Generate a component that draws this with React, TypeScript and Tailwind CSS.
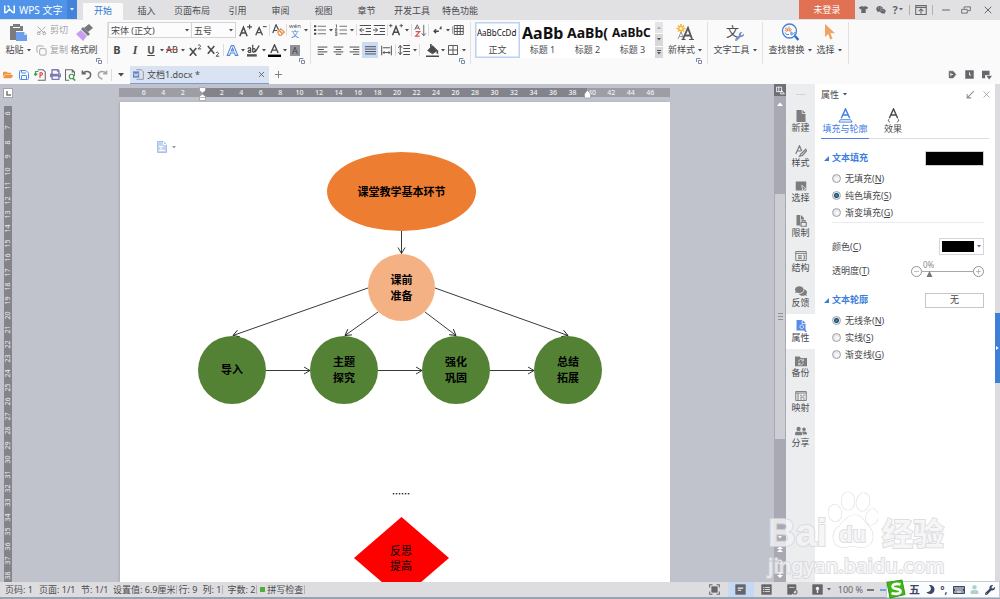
import { useState } from 'react'
import type { ReactNode } from 'react'
import {
  FaComments,
  FaFolderOpen,
  FaKeyboard,
  FaMoon,
  FaPrint,
  FaTshirt,
  FaUser,
  FaUserFriends,
  FaWeixin,
  FaWrench,
} from 'react-icons/fa'
import { Copy, Minus, Plus, Save, Scissors, X } from 'lucide-react'
import clsx from 'clsx'

const MENU_TABS = ['插入', '页面布局', '引用', '审阅', '视图', '章节', '开发工具', '特色功能']

const STYLES = [
  { sample: 'AaBbCcDd', name: '正文', size: 'text-[8px]' },
  { sample: 'AaBb', name: '标题 1', size: 'text-[16px] font-bold' },
  { sample: 'AaBb(', name: '标题 2', size: 'text-[14px] font-bold' },
  { sample: 'AaBbC', name: '标题 3', size: 'text-[12px] font-bold' },
]

// 横向标尺 -6..46，纵向标尺 6..38
const H_TICKS = Array.from({ length: 27 }, (_, i) => Math.abs(i * 2 - 6))
const V_TICKS = Array.from({ length: 33 }, (_, i) => i + 6)

/* ---------- 基础元件 ---------- */

function Icon({ size = 12, children }: { size?: number; children: ReactNode }) {
  return (
    <svg width={size} height={size} viewBox="0 0 16 16" fill="none" stroke="currentColor" className="shrink-0">
      {children}
    </svg>
  )
}

function Tri({ className }: { className?: string }) {
  return (
    <svg width="4" height="3" viewBox="0 0 4 3" className={clsx('shrink-0', className)}>
      <path d="M0 0h4L2 2.6z" fill="currentColor" />
    </svg>
  )
}

function Tool({ label, wide, children }: { label: string; wide?: boolean; children: ReactNode }) {
  return (
    <button
      type="button"
      aria-label={label}
      className={clsx('h-4 shrink-0 flex items-center justify-center', wide ? 'w-[18px]' : 'w-[14px]')}
    >
      {children}
    </button>
  )
}

function Drop({ label }: { label: string }) {
  return (
    <button type="button" aria-label={label} className="w-[7px] h-4 shrink-0 flex items-center justify-center">
      <Tri />
    </button>
  )
}

function Sep() {
  return <span className="w-px h-3 mx-px shrink-0 bg-[#dcdcdc]" />
}

function Group({ launcher, className, children }: { launcher?: boolean; className?: string; children: ReactNode }) {
  return (
    <div className={clsx('flex flex-col shrink-0 border-r border-[#e0e0e0] mb-px', className)}>
      {children}
      {launcher && (
        <button type="button" aria-label="更多设置" className="self-end mr-[5px]">
          <svg width="6" height="6" viewBox="0 0 6 6" fill="none" stroke="#7d8aa5">
            <path d="M.5 4V.5h4M2.500 2.500h3v3h-3z" />
          </svg>
        </button>
      )}
    </div>
  )
}

function BigTool({ label, drop, className, children }: { label: string; drop?: boolean; className?: string; children: ReactNode }) {
  return (
    <button type="button" className={clsx('h-9 shrink-0 flex flex-col items-center justify-between', className)}>
      <span className="h-5 flex items-center">{children}</span>
      <span className="h-4 flex items-center gap-[3px] whitespace-nowrap">
        {label}
        {drop && <Tri />}
      </span>
    </button>
  )
}

/* ---------- 标题栏 ---------- */

function TitleBar() {
  return (
    <header className="h-5 shrink-0 flex bg-[#e1e1e3]">
      <button type="button" className="w-[67px] h-[19px] flex items-center gap-1 pl-1 bg-[#5094ea] text-white text-[10px] whitespace-nowrap">
        <svg width="11" height="9" viewBox="0 0 22 18" fill="none" stroke="#fff" strokeWidth="3">
          <path d="M1.500 1v14h3L11 8l6.500 7h3V1" />
          <path d="M7 1l4 4" />
        </svg>
        WPS 文字
      </button>
      <button type="button" aria-label="主菜单" className="w-[10px] h-[19px] flex items-center justify-center bg-[#4383da] text-white">
        <Tri />
      </button>
      <nav className="flex ml-[6px]">
        <button type="button" className="w-10 mt-[3px] mr-[2px] pb-[2px] bg-[#fafafa] text-[#2f78cf]">开始</button>
        {MENU_TABS.map((t) => (
          <button key={t} type="button" className={clsx('pt-[2px]', t.length > 2 ? 'w-12' : 'w-[43px]')}>
            {t}
          </button>
        ))}
      </nav>
      <div className="ml-auto flex h-[19px] items-center text-[#66666c]">
        <button type="button" className="w-14 h-full bg-[#e17153] text-white">未登录</button>
        <button type="button" aria-label="皮肤" className="w-[17px] flex justify-center"><FaTshirt size={9} /></button>
        <button type="button" aria-label="微信" className="w-[17px] flex justify-center"><FaWeixin size={10} /></button>
        <button type="button" className="w-[17px] flex items-center justify-center gap-px text-[11px] font-bold">
          ?<Tri />
        </button>
        <span className="w-px h-[10px] mx-[3px] bg-[#b0b0b4]" />
        <button type="button" aria-label="隐藏功能区" className="w-4 flex justify-center">
          <Icon size={12}>
            <path d="M1 2h14v12H1zM1 4.500h14M8 13V7M5 9.500l3-3 3 3" strokeWidth="1.400" />
          </Icon>
        </button>
        <span className="w-px h-[10px] mx-[3px] bg-[#b0b0b4]" />
        <button type="button" aria-label="最小化" className="w-5 flex justify-center"><Minus size={12} strokeWidth={2} /></button>
        <button type="button" aria-label="还原" className="w-5 flex justify-center">
          <Icon size={10}>
            <path d="M1 7h9v6H1zM5 6V3h10v6h-4" strokeWidth="1.400" />
          </Icon>
        </button>
        <button type="button" aria-label="关闭" className="w-6 flex justify-center"><X size={12} strokeWidth={2} /></button>
      </div>
    </header>
  )
}

/* ---------- 功能区 ---------- */

function Lines({ d, active, label }: { d: string; active?: boolean; label: string }) {
  return (
    <button
      type="button"
      aria-label={label}
      className={clsx('w-4 h-4 shrink-0 flex items-center justify-center', active && 'bg-[#c9dcf4]')}
    >
      <Icon size={11}><path d={d} strokeWidth="1.400" /></Icon>
    </button>
  )
}

function ClipboardGroup() {
  return (
    <Group launcher className="w-[108px]">
      <div className="flex h-9">
        <BigTool label="粘贴" drop className="w-9">
          <svg width="18" height="17" viewBox="0 0 18 17">
            <path d="M1 2h3V0h7v2h3v5H7v9H1z" fill="#7b7b7f" />
            <path d="M4 3.500h7" stroke="#fafafa" />
            <path d="M7 8h8l3 3v6H7z" fill="#6e9dec" />
            <path d="M15 8v3h3z" fill="#c8dbfa" />
          </svg>
        </BigTool>
        <div className="flex flex-col justify-between text-[#a5a5a8] whitespace-nowrap">
          <button type="button" className="h-4 flex items-center gap-[3px]"><Scissors size={11} className="-rotate-90" />剪切</button>
          <button type="button" className="h-4 flex items-center gap-[3px]"><Copy size={11} />复制</button>
        </div>
        <BigTool label="格式刷" className="w-8">
          <svg width="17" height="17" viewBox="0 0 17 17">
            <path d="M13 0l4 4-5 4-4-4z" fill="#77777b" />
            <path d="M7 3l7 7-2 2-7-7z" fill="#77777b" />
            <path d="M5 6l6 6-4 5-7-7z" fill="#c79df0" />
          </svg>
        </BigTool>
      </div>
    </Group>
  )
}

function FontGroup() {
  return (
    <Group launcher className="w-[203px]">
      <div className="flex items-center h-4">
        <label className="relative w-[84px] h-4 flex">
          <select aria-label="字体" className="w-full h-4 appearance-none border border-[#d4d4d8] bg-[#fcfcfc] pl-[2px] leading-none">
            <option>宋体 (正文)</option>
          </select>
          <Tri className="absolute right-[3px] top-[7px] pointer-events-none" />
        </label>
        <label className="relative w-11 h-4 flex">
          <select aria-label="字号" className="w-full h-4 appearance-none border border-l-0 border-[#d4d4d8] bg-[#fcfcfc] pl-[2px] leading-none">
            <option>五号</option>
          </select>
          <Tri className="absolute right-[3px] top-[7px] pointer-events-none" />
        </label>
        <Tool label="增大字号" wide>
          <Icon size={13}><path d="M1 15L5.500 4 10 15M2.500 11h6" strokeWidth="1.900" /><path d="M10 3.500h6M13 .5v6" strokeWidth="1.400" /></Icon>
        </Tool>
        <Tool label="减小字号">
          <Icon size={12}><path d="M1 15L5.500 5 10 15M2.500 11.500h6" strokeWidth="1.800" /><path d="M10.500 3.500h5" strokeWidth="1.400" /></Icon>
        </Tool>
        <Sep />
        <Tool label="清除格式">
          <Icon size={13}>
            <path d="M1 11L5 1l3 6M2.500 8h4" strokeWidth="1.500" />
            <path d="M7 10l4-4 4 4-4 4H9z" stroke="#e98f45" strokeWidth="1.500" />
            <path d="M9 8l4 4" stroke="#e98f45" strokeWidth="2" />
          </Icon>
        </Tool>
        <Sep />
        <Tool label="拼音指南">
          <span className="flex flex-col items-center text-[6px] leading-[8px]">
            wén<span className="text-[8px] leading-[8px] text-[#4a84dc]">文</span>
          </span>
        </Tool>
        <Drop label="拼音选项" />
      </div>
      <div className="flex items-center h-4 mt-[4px]">
        <Tool label="加粗" wide><b className="text-[11px]">B</b></Tool>
        <Tool label="倾斜" wide><i className="font-['Liberation_Serif',serif] font-bold text-[12px]">I</i></Tool>
        <Tool label="下划线"><span className="text-[10px] font-bold underline">U</span></Tool>
        <Drop label="下划线样式" />
        <Tool label="删除线"><s className="text-[9px] font-medium decoration-[#d94b4b]">AB</s></Tool>
        <Drop label="删除线样式" />
        <Tool label="上标" wide>
          <Icon size={13}><path d="M1 5l8 9.500M9 5L1 14.500" strokeWidth="1.900" /><path d="M11 2c1-1.500 3.500-1 3 1-.3 1-2 2-3 3h4" strokeWidth="1.200" /></Icon>
        </Tool>
        <Tool label="下标" wide>
          <Icon size={13}><path d="M1 2.500L9 12M9 2.500L1 12" strokeWidth="1.900" /><path d="M11 11c1-1.500 3.500-1 3 1-.3 1-2 2-3 3h4" strokeWidth="1.200" /></Icon>
        </Tool>
        <Sep />
        <Tool label="文字效果">
          <Icon size={13}>
            <path d="M1.500 14L6.500 2h3l5 12h-3L10.500 11h-5L4.500 14zM6.500 8.500h3L8 5z" stroke="#4f86de" strokeWidth="1.300" />
          </Icon>
        </Tool>
        <Drop label="效果样式" />
        <Tool label="突出显示">
          <Icon size={13}>
            <path d="M1 6c1-2 3.500-2 3.500 0v4c-4 1.500-4.500-2.500 0-2.500M7 1v9M7 6c4-2 4 4 0 4M15 2l-5 8" strokeWidth="1.500" />
            <path d="M0 14h12" strokeWidth="3" stroke="#555" />
          </Icon>
        </Tool>
        <Drop label="突出显示颜色" />
        <Tool label="字体颜色">
          <Icon size={13}>
            <path d="M3.500 11L8 1l4.500 10M5 7.500h6" strokeWidth="1.700" />
            <path d="M0 14.500h16" stroke="#000" strokeWidth="3" />
          </Icon>
        </Tool>
        <Drop label="选择字体颜色" />
        <Tool label="字符底纹"><span className="w-[10px] h-[11px] bg-[#929298] text-[#444] text-[9px] leading-[11px]">A</span></Tool>
      </div>
    </Group>
  )
}

function ParagraphGroup() {
  return (
    <Group launcher className="w-[160px] pl-[2px]">
      <div className="flex items-center h-4">
        <Tool label="项目符号"><Icon><path d="M5 3h11M5 8h11M5 13h11" /><path d="M0 3h3M0 8h3M0 13h3" strokeWidth="2.500" /></Icon></Tool>
        <Drop label="项目符号样式" />
        <Tool label="编号"><Icon><path d="M6 3h10M6 8h10M6 13h10M1 1h1v4M0 6.500h2.500v1.500H.5v1.500H3M0 11.500h2.500v4H0M0 13.500h2" /></Icon></Tool>
        <Drop label="编号样式" />
        <Sep />
        <Tool label="减少缩进"><Icon><path d="M1 2h15M9 6h7M9 10h7M1 14h15M7 8H1M4 5L1 8l3 3" strokeWidth="1.300" /></Icon></Tool>
        <Tool label="增加缩进"><Icon><path d="M1 2h15M9 6h7M9 10h7M1 14h15M0 8h6M3 5l3 3-3 3" strokeWidth="1.300" /></Icon></Tool>
        <Sep />
        <Tool label="中文版式"><Icon size={14}><path d="M4 14L8 4l4 10M5.500 10.500h5" strokeWidth="1.700" /><path d="M0 3h4M2 1v4M12 3h4M14 1v4" /></Icon></Tool>
        <Drop label="版式选项" />
        <Sep />
        <Tool label="排序">
          <Icon size={13}>
            <path d="M1 7l3-6 3 6M2 5h4" />
            <path d="M2 9.500h5L2 15h5" stroke="#e05252" strokeWidth="1.500" />
            <path d="M12 1v13M9.500 11.500L12 14.500l2.500-3" />
          </Icon>
        </Tool>
        <Sep />
        <Tool label="显示标记"><Icon size={11}><path d="M13 2v3h-2M10 9H3M6 6L3 9l3 3" strokeWidth="2" /></Icon></Tool>
        <Drop label="标记选项" />
        <Tool label="制表位"><Icon><path d="M3 2h12v12H3zM3 6h12M3 10h12M7 2v12M11 2v12M0 3v10" strokeWidth="1.200" /></Icon></Tool>
      </div>
      <div className="flex items-center h-4 mt-[4px] pl-px">
        <Lines label="左对齐" d="M1 3h14M1 6.500h9M1 10h14M1 13.500h9" />
        <Lines label="居中" d="M1 3h14M4 6.500h8M1 10h14M4 13.500h8" />
        <Lines label="右对齐" d="M1 3h14M6 6.500h9M1 10h14M6 13.500h9" />
        <Lines label="两端对齐" active d="M0 2.500h16M0 6h16M0 9.500h16M0 13h16" />
        <Lines label="分散对齐" d="M1 1v14M15 1v14M3 4h10M3 11h10M5 9l-2 2 2 2M11 9l2 2-2 2" />
        <Sep />
        <Tool label="行距"><Icon><path d="M7 2h9M7 6h9M7 10h9M7 14h9M3 2v12M.5 5L3 2l2.500 3M.5 11L3 14l2.500-3" strokeWidth="1.300" /></Icon></Tool>
        <Drop label="行距选项" />
        <Sep />
        <span className="flex pl-1">
          <Tool label="底纹">
            <Icon size={13}>
              <path d="M2 8l6-6 6 6-6 4z" fill="currentColor" />
              <path d="M6 0v5M14 8v4M0 15h16" strokeWidth="2" />
            </Icon>
          </Tool>
          <Drop label="底纹颜色" />
          <Tool label="边框"><Icon><path d="M2 2h12v12H2zM8 2v12M2 8h12" strokeWidth="1.200" /></Icon></Tool>
          <Drop label="边框样式" />
        </span>
      </div>
    </Group>
  )
}

function StyleGallery() {
  return (
    <div className="flex shrink-0 h-9 ml-1">
      {STYLES.map((s, i) => (
        <button
          key={s.name}
          type="button"
          className={clsx(
            'w-[45px] overflow-hidden flex flex-col justify-between bg-white border',
            i === 0 ? 'border-[#bcd2f2] outline outline-1 -outline-offset-2 outline-[#dbe7f8]' : 'border-transparent',
          )}
        >
          <span className={clsx('h-5 w-full pl-px text-left leading-5 text-[#111]', s.size)}>{s.sample}</span>
          <span className="h-[14px] w-full leading-[14px] text-center">{s.name}</span>
        </button>
      ))}
      <div className="w-2 flex flex-col gap-px text-[#555]">
        <button type="button" aria-label="上一行" className="flex-1 flex items-center justify-center bg-[#e4e4e6]"><Tri className="rotate-180 text-[#aaa]" /></button>
        <button type="button" aria-label="下一行" className="flex-1 flex items-center justify-center bg-[#d8d8db]"><Tri /></button>
        <button type="button" aria-label="展开样式" className="flex-1 flex flex-col gap-px items-center justify-center bg-[#d8d8db]">
          <span className="w-1 h-px bg-[#555]" /><Tri />
        </button>
      </div>
    </div>
  )
}

function Ribbon() {
  return (
    <div className="h-[45px] shrink-0 flex pt-[2px] bg-[#fafafa]">
      <ClipboardGroup />
      <FontGroup />
      <ParagraphGroup />
      <StyleGallery />
      <Group launcher className="w-[45px]">
        <BigTool label="新样式" drop>
          <svg width="18" height="17" viewBox="0 0 18 17">
            <path d="M5 0v9M.5 4.500h9M2 1.500l6 6M8 1.500l-6 6" stroke="#f2b436" strokeWidth="1.500" />
            <circle cx="5" cy="4.500" r="2" fill="#fff3cf" stroke="#f2b436" />
            <path d="M2 15L5 8l3 7M3 12.500h4" fill="none" stroke="#999" />
            <path d="M7 15L12 4l4 11M8.500 11.500h6" fill="none" stroke="#55555a" strokeWidth="1.800" />
            <path d="M5.500 15.500h4M13 15.500h5" stroke="#55555a" />
          </svg>
        </BigTool>
      </Group>
      <Group className="w-[55px]">
        <BigTool label="文字工具" drop>
          <span className="relative text-[13px] leading-[14px] pr-[5px] pb-[3px]">
            文
            <FaWrench size={9} className="absolute right-0 bottom-0 text-[#7b8fc4]" />
          </span>
        </BigTool>
      </Group>
      <Group className="w-[86px]">
        <div className="flex">
          <BigTool label="查找替换" drop className="w-[54px]">
            <svg width="18" height="18" viewBox="0 0 18 18" fill="none">
              <circle cx="8.500" cy="8" r="7" stroke="#3f82db" strokeWidth="1.300" />
              <path d="M14 13l3.500 4" stroke="#2f6fc9" strokeWidth="2.500" />
              <path d="M4 5.500c1-1 2.500-.5 2.500.8V8c-2.500.8-3.500-1.500 0-1.500M8 3.500V8M8 6c3-1 3 2.300 0 2" stroke="#e2864b" />
              <path d="M4 9.500l1.500 2H8M10 8.500V12M10 10c2.500-1 2.500 2 0 2M14.500 9.500c-2-1-2 3 0 2" stroke="#3f82db" strokeWidth=".9" />
            </svg>
          </BigTool>
          <BigTool label="选择" drop className="w-6">
            <svg width="11" height="16" viewBox="0 0 11 16">
              <path d="M1 0v13l3.200-3 2 5.500 2.300-1L6.300 9.300H11z" fill="#f0a25f" />
            </svg>
          </BigTool>
        </div>
      </Group>
    </div>
  )
}

/* ---------- 文档标签栏 ---------- */

function DocTabs() {
  return (
    <div className="h-[19px] shrink-0 flex items-center bg-[#fafafa]">
      <div className="flex items-center">
        <button type="button" aria-label="打开" className="w-4 flex justify-center text-[#ef9440]"><FaFolderOpen size={10} /></button>
        <button type="button" aria-label="保存" className="w-4 flex justify-center text-[#4f8be0]"><Save size={12} strokeWidth={2} /></button>
        <button type="button" aria-label="输出为PDF" className="w-4 flex justify-center text-[#66666c]">
          <Icon>
            <path d="M5 1h7l3 3v11H5" strokeWidth="1.400" />
            <path d="M8 12V5c5-1 4 4 0 3.500" stroke="#dd4d43" strokeWidth="1.500" />
            <path d="M6 3L2 3.500V8M0 6l2 2.500L4.500 6" stroke="#3f9b4c" strokeWidth="1.500" />
          </Icon>
        </button>
        <button type="button" aria-label="打印" className="w-[14px] flex justify-center text-[#7d79b5]"><FaPrint size={11} /></button>
        <button type="button" aria-label="打印预览" className="w-4 flex justify-center text-[#66666c]">
          <Icon>
            <path d="M7 15H2V1h9l3 3v5M11 1v3h3" strokeWidth="1.400" />
            <circle cx="10" cy="10" r="3" stroke="#3f9b4c" strokeWidth="1.500" />
            <path d="M12 12.500l3 3" stroke="#3f9b4c" strokeWidth="2" />
          </Icon>
        </button>
        <button type="button" aria-label="撤销" className="w-4 flex justify-center text-[#66666c]">
          <Icon size={11}><path d="M2 2v5h5M2.500 6.500C6 2 14 3 14 8c0 4-3 6-6 6.500" strokeWidth="2.200" /></Icon>
        </button>
        <button type="button" aria-label="恢复" className="w-4 flex justify-center text-[#a5a5a8]">
          <Icon size={11}><path d="M14 2v5H9M13.500 6.500C10 2 2 3 2 8c0 4 3 6 6 6.500" strokeWidth="2.200" /></Icon>
        </button>
        <Sep />
        <button type="button" aria-label="自定义" className="w-4 flex justify-center">
          <svg width="6" height="4" viewBox="0 0 6 4"><path d="M0 0h6L3 3.600z" fill="currentColor" /></svg>
        </button>
      </div>
      <div className="w-[139px] h-[18px] self-end flex items-center gap-[3px] px-[3px] ml-px bg-[#dae3f1] border-b border-[#7a9cd4]">
        <Icon size={11}>
          <path d="M5 1h7l3 3v11H5" stroke="#777" />
          <path d="M0 3.500h9v9H0z" fill="#5b7fc0" stroke="none" />
          <path d="M1.500 5.500L3 10.500l1.500-3.500L6 10.500l1.500-5" stroke="#fff" />
        </Icon>
        <a href="#doc" className="whitespace-nowrap">文档1.docx *</a>
        <button type="button" aria-label="关闭文档" className="ml-auto"><X size={9} strokeWidth={2} /></button>
      </div>
      <button type="button" aria-label="新建标签" className="ml-1 text-[#77777b]"><Plus size={11} strokeWidth={2} /></button>
      <div className="ml-auto flex items-center pr-[5px] text-[#66666c]">
        <button type="button" aria-label="文档" className="w-[17px] flex justify-center">
          <Icon size={9}><path d="M2 2h7l5 6-5 6H2z" fill="currentColor" /><path d="M5 5v6M5 8h4" stroke="#fafafa" strokeWidth="1.500" /></Icon>
        </button>
        <button type="button" aria-label="历史" className="w-[17px] flex justify-center">
          <Icon size={9}><path d="M1 1h14v14H1z" fill="currentColor" /><path d="M8 4v5h3" stroke="#fff" strokeWidth="1.500" /></Icon>
        </button>
        <button type="button" aria-label="更多" className="w-[17px] flex justify-center">
          <Icon size={10}><path d="M0 1h12v7H5v5H0zM7 9h9l-4.500 6z" fill="currentColor" stroke="none" /></Icon>
        </button>
      </div>
    </div>
  )
}

/* ---------- 文档画布 ---------- */

function RulerThumb({ bottomOnly, className }: { bottomOnly?: boolean; className: string }) {
  return (
    <svg width="7" height="14" viewBox="0 0 7 14" fill="#fff" stroke="#8a8a90" strokeWidth=".6" className={clsx('absolute -top-px', className)}>
      {!bottomOnly && <path d="M.5.5h6v3L3.500 6l-3-2.500z" />}
      {bottomOnly ? <path d="M3.500 3l3 4v4h-6V7z" /> : <path d="M3.500 7l3 2.500v4h-6v-4zM.5 10.500h6" />}
    </svg>
  )
}

const NODES = [
  { lines: ['课堂教学基本环节'], box: 'left-[207px] top-[50px] w-[149px] h-[79px] bg-[#ed7d31]' },
  { lines: ['课前', '准备'], box: 'left-[248px] top-[152px] w-[67px] h-[67px] bg-[#f4b183]' },
  { lines: ['导入'], box: 'left-[78px] top-[234px] w-[68px] h-[68px] bg-[#548235]' },
  { lines: ['主题', '探究'], box: 'left-[190px] top-[234px] w-[68px] h-[68px] bg-[#548235]' },
  { lines: ['强化', '巩固'], box: 'left-[302px] top-[234px] w-[68px] h-[68px] bg-[#548235]' },
  { lines: ['总结', '拓展'], box: 'left-[414px] top-[234px] w-[68px] h-[68px] bg-[#548235]' },
]

const LINKS = [
  'M281.500 129V151.500',
  'M248 186L113 233.500',
  'M258 210L225 233.500',
  'M305 210L336 233.500',
  'M315 186L448 233.500',
  'M146 268.500H190',
  'M258 268.500H302',
  'M370 268.500H414',
]

function Page() {
  return (
    <article id="doc" className="relative flex-1 overflow-hidden bg-white shadow-[-1px_0_2px_#a9abb5] text-black text-[11px] leading-4">
      <button type="button" aria-label="粘贴选项" className="absolute left-[37px] top-[39px] flex items-center gap-[5px] text-[#9a9aa0]">
        <svg width="10" height="12" viewBox="0 0 10 12" fill="none">
          <path d="M.5.5h6l3 3v8h-9z" fill="#c2d5f0" stroke="#a9c2e6" />
          <path d="M6.500.5v3h3M2 5.500h4M2 9.500h6M4 5.500v4" stroke="#fff" />
        </svg>
        <Tri />
      </button>
      <svg width="550" height="480" className="absolute left-0 top-0" fill="none" stroke="#222" strokeWidth=".9">
        <defs>
          <marker id="arrow" markerUnits="userSpaceOnUse" markerWidth="10" markerHeight="10" refX="7" refY="4.500" orient="auto">
            <path d="M1 1l6 3.500L1 8" fill="none" stroke="#222" strokeWidth=".9" />
          </marker>
        </defs>
        {LINKS.map((d) => (
          <path key={d} d={d} markerEnd="url(#arrow)" />
        ))}
        <path d="M281.500 415L329 456l-47.500 41L234 456z" fill="#f00" stroke="none" />
      </svg>
      {NODES.map((n) => (
        <div key={n.lines[0]} className={clsx('absolute rounded-[50%] flex flex-col items-center justify-center font-bold whitespace-nowrap', n.box)}>
          {n.lines.map((l) => (
            <span key={l}>{l}</span>
          ))}
        </div>
      ))}
      <div lang="zh-CN" className="absolute left-[272px] top-[384px] font-['Noto_Sans_CJK_SC',sans-serif] text-[9px] font-bold">……</div>
      <div className="absolute left-[270px] top-[441px] w-6 flex flex-col leading-[15px]">
        <span>反思</span>
        <span>提高</span>
      </div>
    </article>
  )
}

function Canvas() {
  return (
    <main className="flex-1 min-w-0 flex bg-[#c0c2cc]">
      <div className="w-[14px] shrink-0 flex flex-col pt-1">
        <button type="button" aria-label="制表符" className="ml-[3px] mb-[8px] w-[10px] h-[10px] border border-[#a5a6ae] bg-white flex items-center justify-center">
          <svg width="5" height="5" viewBox="0 0 5 5"><path d="M1 0v4h4" fill="none" stroke="#777" strokeWidth="1.500" /></svg>
        </button>
        <div className="flex-1 min-h-0 ml-1 w-2 flex flex-col bg-[#83838b] text-[#eee] text-[7px]">
          {V_TICKS.map((n) => (
            <span key={n} className="flex-1 min-h-0 w-2 flex items-center justify-center leading-[8px] [writing-mode:vertical-rl] rotate-180">
              {n}
            </span>
          ))}
        </div>
      </div>
      <div className="flex-1 min-w-0 flex flex-col pl-[106px] pr-[104px] pt-1">
        <div className="relative h-[9px] shrink-0 mb-[5px] -ml-px flex items-center pl-[15px] pr-[10px] text-[#f2f2f2] text-[7px] font-medium bg-[linear-gradient(to_right,#9d9da6_83px,#83838b_83px,#83838b_468px,#9d9da6_468px)]">
          {H_TICKS.map((n, i) => (
            <span key={i} className="flex-1 text-center leading-[9px]">
              {n || ''}
            </span>
          ))}
          <RulerThumb className="left-[80px]" />
          <RulerThumb bottomOnly className="left-[465px]" />
        </div>
        <Page />
      </div>
      <div className="w-3 shrink-0 flex flex-col items-center bg-[#a9a9b4] text-white">
        <button type="button" aria-label="标尺开关" className="w-3 h-3 flex items-center justify-center bg-[#6f6f77]">
          <Icon size={9}><path d="M1 2h9v8H1zM5 2v8M10 8l5 6H8z" strokeWidth="1.500" /></Icon>
        </button>
        <button type="button" aria-label="向上" className="h-4 flex items-center justify-center">
          <svg width="6" height="4" viewBox="0 0 6 4"><path d="M0 4h6L3 .5z" fill="#fff" /></svg>
        </button>
        <div className="mt-[82px] h-[245px] w-[10px] flex flex-col items-center justify-center gap-[2px] bg-[#cdced3]">
          <span className="w-[5px] h-px bg-[#8f9098]" />
          <span className="w-[5px] h-px bg-[#8f9098]" />
          <span className="w-[5px] h-px bg-[#8f9098]" />
        </div>
        <div className="mt-auto pb-1 flex flex-col items-center gap-[7px]">
          <Tri />
          <svg width="6" height="6" viewBox="0 0 6 6" fill="#fff"><path d="M0 3l3-3 3 3zM0 6l3-3 3 3z" /></svg>
          <svg width="6" height="6" viewBox="0 0 6 6" fill="none" stroke="#fff"><circle cx="3" cy="3" r="2" /></svg>
          <svg width="6" height="6" viewBox="0 0 6 6" fill="#fff"><path d="M0 0l3 3 3-3zM0 3l3 3 3-3z" /></svg>
        </div>
      </div>
    </main>
  )
}

/* ---------- 侧边导航 ---------- */

const SIDE_ITEMS: { label: string; icon: ReactNode }[] = [
  { label: '新建', icon: <Icon><path d="M2 0h7v5h5v11H2zM10 0l4 4h-4z" fill="currentColor" stroke="none" /></Icon> },
  { label: '样式', icon: <Icon><path d="M1 12L6 1l3 7M3 8h5M15 5l-7 7-2 3 4-1 6-7" strokeWidth="1.600" /></Icon> },
  {
    label: '选择',
    icon: (
      <Icon>
        <path d="M1 2h14v12H1z" fill="currentColor" stroke="none" />
        <path d="M9 7l6 5-3 .5L10.500 15z" fill="currentColor" stroke="#ecedef" />
      </Icon>
    ),
  },
  {
    label: '限制',
    icon: (
      <Icon>
        <path d="M2 0h5v14H2zM8 0l4 4v2H8z" fill="currentColor" stroke="none" />
        <path d="M8 10h7v5H8zM9.500 10V7.500h4V10" strokeWidth="1.500" />
      </Icon>
    ),
  },
  { label: '结构', icon: <Icon><path d="M1 2h14v12H1zM1 4.500h14M4 7.500h5M4 9.500h5M4 11.500h5M11 7h1.500v5H11" strokeWidth="1.300" /></Icon> },
  { label: '反馈', icon: <FaComments size={12} /> },
  {
    label: '属性',
    icon: (
      <Icon>
        <path d="M2 0h7v5h5v9H2zM10 0l4 4h-4z" fill="currentColor" stroke="none" />
        <circle cx="9" cy="9" r="2.500" stroke="#fff" />
        <path d="M11 11l4 5" strokeWidth="2" />
      </Icon>
    ),
  },
  {
    label: '备份',
    icon: (
      <Icon>
        <path d="M0 2h6l2 2h8v11H0z" fill="currentColor" stroke="none" />
        <path d="M5 9c0-4 5-4 6-1.500M11 10c0 4-5 4-6 1.500M11 5v3H8.500M5 14v-3h2.500" stroke="#ecedef" />
      </Icon>
    ),
  },
  { label: '映射', icon: <Icon><path d="M1 2h14v12H1zM1 4h14M4 4v10M7 7h2M7 12h2M7 9.500h5M11 7h2M11 12h2" strokeWidth="1.300" /></Icon> },
  { label: '分享', icon: <FaUserFriends size={12} /> },
]

function SideNav({ active, onPick }: { active: string; onPick: (v: string) => void }) {
  return (
    <nav className="w-[29px] shrink-0 flex flex-col items-center bg-[#ecedef] pt-[10px]">
      <span className="w-[10px] h-px mb-[9px] bg-[#d3d4d8]" />
      {SIDE_ITEMS.map((it) => (
        <button
          key={it.label}
          type="button"
          onClick={() => onPick(it.label)}
          className={clsx('w-full h-[35px] flex flex-col items-center justify-center', active === it.label && 'bg-white')}
        >
          <span className={clsx('h-[13px] flex items-center', active === it.label ? 'text-[#5b8be6]' : 'text-[#7d7d80]')}>{it.icon}</span>
          <span className="leading-[12px]">{it.label}</span>
        </button>
      ))}
    </nav>
  )
}

/* ---------- 属性面板 ---------- */

function Choice({ name, value, hotkey, checked, onPick }: { name: string; value: string; hotkey: string; checked: boolean; onPick: (v: string) => void }) {
  return (
    <label className="flex items-center gap-[4px] h-[17px] pl-[17px]">
      <input
        type="radio"
        name={name}
        checked={checked}
        onChange={() => onPick(value)}
        className="appearance-none w-[9px] h-[9px] rounded-full border border-[#a3a3a8] bg-[radial-gradient(circle_at_60%_60%,#fff,#d2d2d6)] checked:bg-[radial-gradient(circle,#3aa0d0_0,#164a70_2px,#e6e6ea_3px)]"
      />
      <span>
        {value}(<u>{hotkey}</u>)
      </span>
    </label>
  )
}

function SectionTitle({ children }: { children: ReactNode }) {
  return (
    <h3 className="flex items-center gap-[3px] pl-[9px] font-bold text-[#3c7ddb]">
      <svg width="5" height="5" viewBox="0 0 5 5"><path d="M5 0v5H0z" fill="currentColor" /></svg>
      {children}
    </h3>
  )
}

const FILLS = [['无填充', 'N'], ['纯色填充', 'S'], ['渐变填充', 'G']]
const OUTLINES = [['无线条', 'N'], ['实线', 'S'], ['渐变线', 'G']]

function PropertyPanel() {
  const [fill, setFill] = useState('纯色填充')
  const [outline, setOutline] = useState('无线条')
  const [alpha, setAlpha] = useState(0)

  return (
    <aside className="w-[180px] shrink-0 bg-white pr-[11px]">
      <div className="flex items-center h-5 pl-[6px] pt-px">
        <button type="button" className="flex items-center gap-1">属性<Tri /></button>
        <div className="ml-auto -mr-2 flex items-center gap-[6px] text-[#8c8c90]">
          <button type="button" aria-label="停靠"><Icon size={9}><path d="M14 2L3 13M2 7v7h7" strokeWidth="1.800" /></Icon></button>
          <button type="button" aria-label="关闭面板"><X size={11} strokeWidth={1.5} /></button>
        </div>
      </div>
      <div className="flex ml-[6px] -mr-[5px] h-[35px] border-b border-[#dedee2]">
        <button type="button" className="w-12 -mb-px flex flex-col items-center justify-end pb-[3px] border-b border-[#4a82e0] text-[#3f7de0] whitespace-nowrap">
          <Icon size={15}>
            <path d="M3.500 11L8 1l4.500 10M5 7.500h6" strokeWidth="1.500" />
            <path d="M2.500 12.500h11l1.500 2.500H1z" />
          </Icon>
          填充与轮廓
        </button>
        <button type="button" className="w-12 flex flex-col items-center justify-end pb-[3px]">
          <Icon size={15}>
            <path d="M3.500 11L8 1l4.500 10M5 7.500h6" strokeWidth="1.500" />
            <path d="M3 12c-1 1-.5 2.500 1 3M13 12c1 1 .5 2.500-1 3" />
          </Icon>
          效果
        </button>
      </div>

      <div className="flex items-center justify-between h-[18px] mt-[10px]">
        <SectionTitle>文本填充</SectionTitle>
        <button type="button" aria-label="填充预设" className="w-[59px] h-[15px] bg-black border border-[#d0d0d4]" />
      </div>
      <fieldset className="mt-[3px]">
        {FILLS.map(([v, k]) => (
          <Choice key={v} name="fill" value={v} hotkey={k} checked={fill === v} onPick={setFill} />
        ))}
      </fieldset>
      <hr className="ml-[17px] mt-px border-[#ececef]" />
      <div className="flex items-center justify-between pl-[17px] mt-[15px] h-[17px]">
        <label htmlFor="color">颜色(<u>C</u>)</label>
        <button id="color" type="button" className="w-[45px] h-[17px] p-[2px] flex items-center gap-[3px] border border-[#d5d5d9]">
          <span className="w-8 h-[11px] bg-black" />
          <Tri className="text-[#5f7190]" />
        </button>
      </div>
      <div className="flex items-center pl-[17px] mt-2 h-4">
        <label htmlFor="alpha" className="mr-auto">透明度(<u>T</u>)</label>
        <button type="button" aria-label="减少" onClick={() => setAlpha(Math.max(0, alpha - 1))} className="w-[11px] h-[11px] rounded-full border border-[#929297] text-[#929297] flex items-center justify-center">
          <Minus size={7} />
        </button>
        <div className="relative w-[51px]">
          <input
            id="alpha"
            type="range"
            value={alpha}
            onChange={(e) => setAlpha(Number(e.target.value))}
            className="block w-full h-3 appearance-none bg-transparent bg-[linear-gradient(#a8a8ac,#a8a8ac)] bg-[length:100%_1px] bg-center bg-no-repeat [&::-webkit-slider-thumb]:appearance-none [&::-webkit-slider-thumb]:w-[15px] [&::-webkit-slider-thumb]:h-3 [&::-webkit-slider-thumb]:bg-[#77777b] [&::-webkit-slider-thumb]:[clip-path:polygon(50%_50%,70%_100%,30%_100%)]"
          />
          <output htmlFor="alpha" className="absolute left-px -top-[4px] text-[8px] leading-none text-[#8c8c90]">{alpha}%</output>
        </div>
        <button type="button" aria-label="增加" onClick={() => setAlpha(Math.min(100, alpha + 1))} className="w-[11px] h-[11px] rounded-full border border-[#929297] text-[#929297] flex items-center justify-center">
          <Plus size={7} />
        </button>
      </div>

      <div className="flex items-center justify-between h-[18px] mt-3">
        <SectionTitle>文本轮廓</SectionTitle>
        <button type="button" className="w-[59px] h-[15px] flex items-center justify-center border border-[#c6c6ca]">无</button>
      </div>
      <fieldset className="mt-[3px]">
        {OUTLINES.map(([v, k]) => (
          <Choice key={v} name="outline" value={v} hotkey={k} checked={outline === v} onPick={setOutline} />
        ))}
      </fieldset>
    </aside>
  )
}

/* ---------- 状态栏 ---------- */

function StatusBar() {
  return (
    <footer className="relative h-[15px] shrink-0 flex items-center pl-[5px] bg-[#dddde0] text-[#4a4a4e] whitespace-nowrap">
      <span className="w-[34px]">页码: 1</span>
      <span className="w-[42px]">页面: 1/1</span>
      <span className="w-8">节: 1/1</span>
      <span>设置值: 6.9厘米</span>
      <i className="w-px h-[9px] mx-px bg-[#b5b5b9]" />
      <span className="w-6">行: 9</span>
      <span>列: 1</span>
      <i className="w-px h-[9px] ml-px mr-1 bg-[#b5b5b9]" />
      <span>字数: 2</span>
      <i className="w-px h-[9px] mx-px bg-[#b5b5b9]" />
      <i className="w-[5px] h-[5px] mx-[2px] bg-[#4fae3a]" />
      <span>拼写检查</span>
      <i className="w-px h-[9px] mx-px bg-[#b5b5b9]" />

      <div className="ml-auto h-full flex items-center pr-[113px] text-[#66666a]">
        <button type="button" aria-label="全屏" className="w-[26px] flex justify-center">
          <Icon size={11}><path d="M4 4h8v8H4z" fill="currentColor" /><path d="M1 5V1h4M11 1h4v4M15 11v4h-4M5 15H1v-4" strokeWidth="1.500" /></Icon>
        </button>
        <button type="button" aria-label="页面视图" className="w-[26px] h-full flex items-center justify-center bg-[#c6d9f3]">
          <Icon size={11}><path d="M1 1h14v14H1z" fill="currentColor" /><path d="M4 6h8M4 9h5" stroke="#e8effa" strokeWidth="1.500" /></Icon>
        </button>
        <button type="button" aria-label="大纲视图" className="w-[26px] flex justify-center">
          <Icon size={11}><path d="M1 1h14v14H1z" fill="currentColor" /><path d="M3 5h2M6 5h7M3 8h2M6 8h7M3 11h2M6 11h7" stroke="#eee" strokeWidth="1.300" /></Icon>
        </button>
        <button type="button" aria-label="Web视图" className="w-[26px] flex justify-center">
          <Icon size={11}><path d="M1 1h12v6l-6 8H1z" fill="currentColor" /><path d="M3 5h8" stroke="#eee" /><circle cx="11.500" cy="11.500" r="3" strokeWidth="1.500" /></Icon>
        </button>
        <button type="button" aria-label="护眼模式" className="w-[32px] flex items-center justify-center gap-[4px]">
          <Icon size={11}><path d="M1 1h14v14H1z" fill="currentColor" /><circle cx="8" cy="6.500" r="2.500" fill="#eee" stroke="none" /><path d="M8 8v5" stroke="#eee" strokeWidth="2" /></Icon>
          <Tri />
        </button>
        <span>100 %</span>
        <button type="button" aria-label="缩小" className="ml-1 w-[7px] h-[2px] bg-[#77777b]" />
        <span className="ml-[6px] w-[7px] h-[2px] bg-[#6fa3e8]" />
      </div>

      {/* 输入法悬浮条 */}
      <div className="absolute right-0 -bottom-px h-[17px] w-[114px] flex items-center pl-[22px] pr-1 justify-between bg-[#fbfcfd] border border-[#c5ccd6] text-[#3c4666]">
        <svg width="20" height="20" viewBox="0 0 20 20" className="absolute -left-px -top-[3px]" fill="none">
          <path d="M1 3.500L16 1l3 14.500L4 19z" fill="#3fb618" stroke="#2f9a10" />
          <path d="M14.500 5.500C9 4 5.500 6 7 8.500c1.500 2 7 .5 7.500 3.500.3 3-5 3.500-9 2" stroke="#fff" strokeWidth="2.800" />
        </svg>
        <b className="text-[11px]">五</b>
        <FaMoon size={9} className="-scale-x-100" />
        <b className="text-[10px]">°,</b>
        <FaKeyboard size={12} />
        <FaUser size={9} className="text-[#b4cfca]" />
        <FaWrench size={10} />
      </div>
    </footer>
  )
}

function Watermark() {
  return (
    <div aria-hidden className="absolute right-[52px] bottom-[20px] w-[180px] h-[88px] pointer-events-none font-bold leading-none text-[#f4f4f6] opacity-80 [paint-order:stroke_fill] [-webkit-text-stroke:2px_#d6d6da]">
      <span className="absolute left-0 top-[23px] font-['Liberation_Sans',sans-serif] text-[38px]">Bai</span>
      <svg width="50" height="60" viewBox="0 0 50 60" className="absolute left-[60px] top-0 fill-white stroke-[#d8d8dc]" strokeWidth="1.200">
        <ellipse cx="7" cy="22" rx="6.500" ry="8.500" transform="rotate(-10 7 22)" />
        <ellipse cx="20" cy="10" rx="6.500" ry="9" />
        <ellipse cx="35" cy="11" rx="6.500" ry="9" transform="rotate(12 35 11)" />
        <ellipse cx="44" cy="26" rx="6" ry="8" transform="rotate(15 44 26)" />
        <path d="M27 24c7 0 9 7 14 12 6 6 5 18-4 20-6 1-8-1-12-1s-7 2-12 1c-9-2-10-13-4-19 6-5 10-13 18-13z" />
      </svg>
      <span className="absolute left-[71px] top-[33px] font-['Liberation_Sans',sans-serif] text-[22px]">du</span>
      <span className="absolute left-[114px] top-[27px] text-[31px]">经验</span>
      <span className="absolute left-0 top-[65px] text-[20px] font-medium">jingyan.baidu.com</span>
    </div>
  )
}

export default function App() {
  const [side, setSide] = useState('属性')

  return (
    <div className="relative h-screen flex flex-col overflow-hidden font-['Noto_Sans','Noto_Sans_CJK_SC',sans-serif] text-[9px] leading-[12px] text-[#4a4a4e]">
      <TitleBar />
      <Ribbon />
      <DocTabs />
      <div className="flex-1 min-h-0 flex">
        <Canvas />
        <SideNav active={side} onPick={setSide} />
        <PropertyPanel />
        <div className="w-[5px] shrink-0 flex flex-col bg-[#dcdce0]">
          <button type="button" aria-label="收起面板" className="mt-[229px] h-[70px] flex items-center justify-center bg-[#3f7fd6] text-white">
            <svg width="3" height="4" viewBox="0 0 3 4"><path d="M0 0v4l2.600-2z" fill="currentColor" /></svg>
          </button>
        </div>
      </div>
      <StatusBar />
      <div className="h-[2px] shrink-0 bg-[#97a3b1]" />
      <Watermark />
    </div>
  )
}
